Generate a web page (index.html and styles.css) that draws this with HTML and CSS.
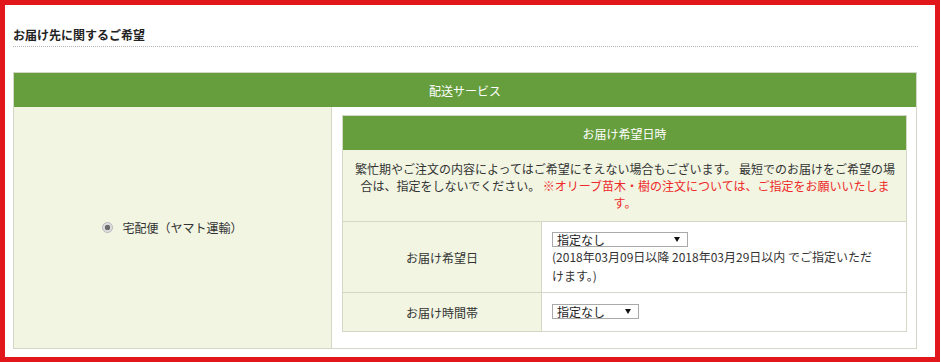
FILE: index.html
```html
<!DOCTYPE html>
<html lang="ja">
<head>
  <meta charset="UTF-8">
  <meta name="viewport" content="width=device-width, initial-scale=1.0">
  <title>お届け先に関するご希望</title>
  <link rel="stylesheet" href="styles.css">
</head>
<body>
  <div class="frame">
    <h2 class="section-title">お届け先に関するご希望</h2>

    <table class="delivery-table">
      <tr>
        <th colspan="2" class="head">配送サービス</th>
      </tr>
      <tr>
        <td class="service-cell">
          <label class="service-option">
            <input type="radio" name="service" class="radio" checked>
            宅配便（ヤマト運輸）
          </label>
        </td>
        <td class="detail-cell">
          <table class="date-table">
            <tr>
              <th colspan="2" class="head">お届け希望日時</th>
            </tr>
            <tr>
              <td colspan="2" class="notice">
                繁忙期やご注文の内容によってはご希望にそえない場合もございます。 最短でのお届けをご希望の場合は、指定をしないでください。 <span class="warn">※オリーブ苗木・樹の注文については、ご指定をお願いいたしま</span><span class="warn">す。</span>
              </td>
            </tr>
            <tr>
              <td class="label">お届け希望日</td>
              <td class="value">
                <span class="select-wrap">
                  <select class="select wide">
                    <option>指定なし</option>
                  </select>
                </span>
                <p class="hint">(2018年03月09日以降 2018年03月29日以内 でご指定いただけます。)</p>
              </td>
            </tr>
            <tr>
              <td class="label">お届け時間帯</td>
              <td class="value short">
                <span class="select-wrap">
                  <select class="select narrow">
                    <option>指定なし</option>
                  </select>
                </span>
              </td>
            </tr>
          </table>
        </td>
      </tr>
    </table>
  </div>
</body>
</html>
```

FILE: styles.css
```css
:root {
  --green: #669e3d;
  --beige: #f1f5e2;
  --line: #d4d6c6;
  --text: #333333;
  --red: #ee2a2a;
  --frame-red: #e1171b;
}

body {
  margin: 0;
  padding: 0;
  font-family: "Noto Sans CJK JP", "Liberation Sans", sans-serif;
  font-size: 12px;
  color: var(--text);
  background-color: #ffffff;
}

.frame {
  width: 940px;
  height: 362px;
  box-sizing: border-box;
  border: 5px solid var(--frame-red);
  padding: 21px 17px 0 8px;
}

.section-title {
  margin: 0 0 25px;
  padding-bottom: 3px;
  font-size: 12px;
  line-height: 17px;
  font-weight: bold;
  color: #222222;
  border-bottom: 1px dotted #b5b5b5;
}

table {
  border-collapse: collapse;
  border-spacing: 0;
}

.delivery-table {
  width: 904px;
  border: 1px solid var(--line);
}

.head {
  background-color: var(--green);
  color: #ffffff;
  font-weight: normal;
  text-align: center;
  padding: 0;
}

.delivery-table > tbody > tr > .head {
  height: 34px;
}

.service-cell {
  width: 317px;
  background-color: var(--beige);
  border-right: 1px solid var(--line);
  text-align: center;
  vertical-align: middle;
  padding: 0;
}

.service-option {
  display: inline-flex;
  align-items: center;
  gap: 9px;
}

/* ラジオボタン */
.radio {
  appearance: none;
  margin: 0;
  width: 11px;
  height: 11px;
  border-radius: 50%;
  border: 1px solid #b8b8b8;
  background: radial-gradient(circle, #6b6b6b 0 2.5px, #d9d9d9 3px, #ececec 100%);
  box-sizing: border-box;
}

.detail-cell {
  background-color: #ffffff;
  padding: 8px 9px 16px 10px;
  vertical-align: top;
}

.date-table {
  width: 100%;
  border: 1px solid var(--line);
}

.date-table .head {
  height: 34px;
}

.notice {
  background-color: var(--beige);
  text-align: center;
  line-height: 17px;
  padding: 10px 7px 10px 8px;
  border-bottom: 1px solid var(--line);
}

.warn {
  color: var(--red);
}

.label {
  width: 198px;
  background-color: var(--beige);
  border-right: 1px solid var(--line);
  border-bottom: 1px solid var(--line);
  text-align: center;
  padding: 0;
}

.value {
  padding: 10px 24px 7px 10px;
  border-bottom: 1px solid var(--line);
  line-height: 19px;
}

.value.short {
  padding: 11px 10px 12px;
}

.hint {
  margin: 0;
}

/* セレクトボックス */
.select-wrap {
  display: block;
  width: max-content;
  position: relative;
}

.select-wrap:after {
  content: "";
  position: absolute;
  right: 8px;
  top: 5px;
  border-left: 3px solid transparent;
  border-right: 3px solid transparent;
  border-top: 5px solid #111111;
  pointer-events: none;
}

.select {
  appearance: none;
  display: block;
  height: 15px;
  margin: 0;
  padding: 0 4px;
  font-family: inherit;
  font-size: 12px;
  line-height: 13px;
  color: #222222;
  background-color: #ffffff;
  border: 1px solid #a9a9a9;
  border-radius: 0;
  box-sizing: border-box;
}

.select.wide {
  width: 136px;
}

.select.narrow {
  width: 87px;
}
```
